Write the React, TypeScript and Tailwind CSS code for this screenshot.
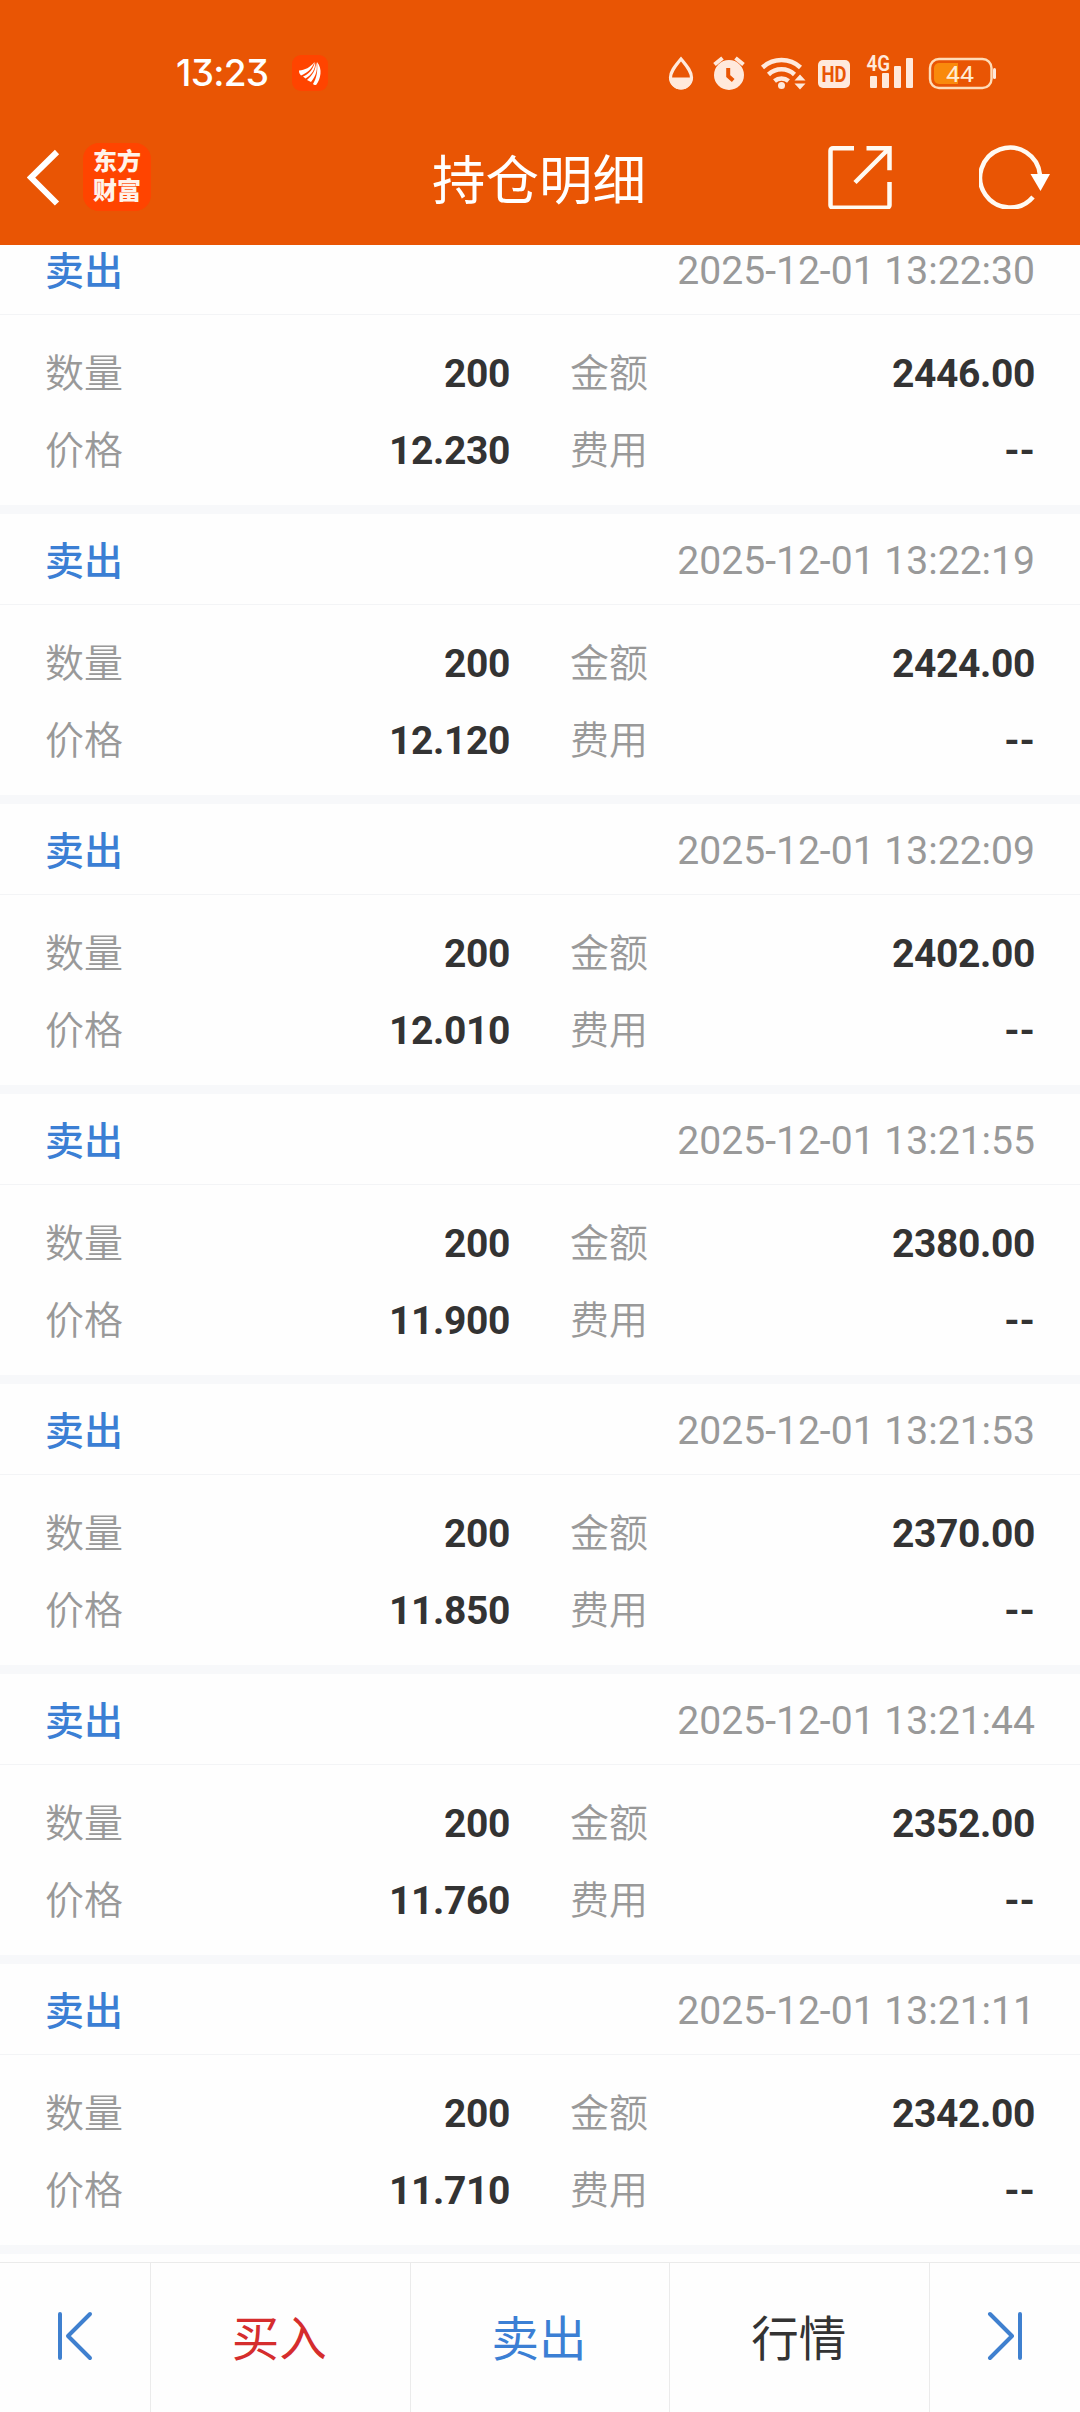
import React from "react";

const FONT = "font-['Roboto','Noto_Sans_CJK_SC',sans-serif]";

type Trade = { time: string; qty: string; amount: string; price: string };

const trades: Trade[] = [
  { time: "2025-12-01 13:22:30", qty: "200", amount: "2446.00", price: "12.230" },
  { time: "2025-12-01 13:22:19", qty: "200", amount: "2424.00", price: "12.120" },
  { time: "2025-12-01 13:22:09", qty: "200", amount: "2402.00", price: "12.010" },
  { time: "2025-12-01 13:21:55", qty: "200", amount: "2380.00", price: "11.900" },
  { time: "2025-12-01 13:21:53", qty: "200", amount: "2370.00", price: "11.850" },
  { time: "2025-12-01 13:21:44", qty: "200", amount: "2352.00", price: "11.760" },
  { time: "2025-12-01 13:21:11", qty: "200", amount: "2342.00", price: "11.710" },
];

function Field({ label, value }: { label: string; value: string }) {
  return (
    <div className="flex h-[77px] items-center justify-between">
      <span className="font-[350] text-[#999999]">{label}</span>
      <span className={`font-bold text-[#333333] ${value === "--" ? "tracking-normal" : "tracking-[-0.35px]"}`}>{value}</span>
    </div>
  );
}

function TradeCard({ trade }: { trade: Trade }) {
  return (
    <section className="h-[290px] shrink-0 border-b-9 border-[#f7f8fa] text-[39px] leading-none">
      <div className="flex h-[91px] items-center justify-between border-b border-[#f3f4f6] px-[45px] pt-[5px]">
        <span className="pt-px font-medium text-[#3b7fd4]">卖出</span>
        <span className="text-[39.1px] text-[#999999]">{trade.time}</span>
      </div>
      <div className="grid grid-cols-2 gap-x-[60px] px-[45px] pt-[21px]">
        <Field label="数量" value={trade.qty} />
        <Field label="金额" value={trade.amount} />
        <Field label="价格" value={trade.price} />
        <Field label="费用" value="--" />
      </div>
    </section>
  );
}

function StatusBar() {
  return (
    <div className="flex h-[143px] items-center pt-0.5 pl-[176px] pr-[84px]">
      <span className="w-[93px] text-[37px] leading-none font-medium whitespace-nowrap text-white font-['Inter',sans-serif] tracking-[-0.7px] [font-feature-settings:'cv09']">
        13:23
      </span>
      <svg className="ml-[23px]" width="36" height="36" viewBox="0 0 36 36">
        <rect width="36" height="36" rx="9" fill="#ff4400" />
        <path
          d="M7 15.500c6-.5 11-3 15.500-8.500-2.500 7-7.500 11-13.500 13.500-1.500-1.500-2-3-2-5zM11 21.500c6-2.500 10-7 12-14.500 1 7-3.500 13-9.500 16.500zM15 25c5-4.500 9-9.500 9-18 2 7 .5 13-5 20zM21 29c3.500-6 5-12 4-22 6 7 3.500 17-.5 22.500-1.500 1-2.500.5-3.500-.5z"
          fill="#fff"
        />
      </svg>
      <svg className="ml-auto overflow-visible" width="328" height="36" viewBox="668 54 328 36">
        <g fill="#ffe9dc">
          <path d="M681 58c-5 6.300-10.500 12-10.500 18.500a10.500 10.500 0 0 0 21 0c0-6.500-5.500-12.200-10.500-18.500z" fill="none" stroke="#ffe9dc" strokeWidth="3.200" />
          <path d="M669.500 76.500h23a11.500 12 0 0 1-23 0z" />
          <circle cx="729" cy="74" r="15" />
          <path d="M714.500 63.500l8-6.500M743.500 63.500l-8-6.500" stroke="#ffe9dc" strokeWidth="4" fill="none" />
          <path d="M728.200 67v8l5 4.500" stroke="#e95504" strokeWidth="4" fill="none" />
          <path d="M762.500 66.500a28 28 0 0 1 38 0M768.500 73.500a19 19 0 0 1 26 0M774.500 80a11 11 0 0 1 14 0" stroke="#ffe9dc" strokeWidth="4.500" fill="none" />
          <circle cx="781.500" cy="84.500" r="3.500" />
          <path d="M800 73.500l5.500 6h-11zM800 88.500l5.500-6h-11z" />
          <rect x="818" y="59" width="32" height="28" rx="5" />
          <rect x="870" y="75" width="7" height="12" rx="1" />
          <rect x="882" y="72" width="7" height="15" rx="1" />
          <rect x="894" y="65" width="7" height="22" rx="1" />
          <rect x="906" y="57" width="7" height="30" rx="1" />
          <rect x="993" y="67" width="3" height="11" rx="1.500" />
        </g>
        <text x="834" y="80.700" textAnchor="middle" textLength="25" lengthAdjust="spacingAndGlyphs" className="text-[22px] font-bold font-['Roboto',sans-serif]" fill="#e95504">HD</text>
        <text x="866.500" y="70" textLength="23.500" lengthAdjust="spacingAndGlyphs" className="text-[21.5px] font-semibold font-['Roboto',sans-serif]" fill="#ffe9dc">4G</text>
        <rect x="930" y="58" width="61.500" height="29" rx="9" fill="none" stroke="#ffdcb8" strokeWidth="2.400" />
        <path d="M958 62h-19a5 5 0 0 0-5 5v11a5 5 0 0 0 5 5h19z" fill="#f98a0c" />
        <text x="960" y="81.200" textAnchor="middle" textLength="28" lengthAdjust="spacingAndGlyphs" className="text-[22px] font-normal font-['Roboto',sans-serif]" fill="#ffecd6">44</text>
      </svg>
    </div>
  );
}

function TitleBar() {
  return (
    <div className="relative flex h-[102px] items-start justify-between pr-[30px] pl-[27px]">
      <div className="flex items-center">
        <svg width="33" height="66" viewBox="0 0 33 66" fill="none">
          <path d="M30 8L4 33.500l26 26" stroke="#fff" strokeWidth="6" />
        </svg>
        <div className="ml-[23px] flex size-[68px] flex-col items-center justify-center rounded-[16px] bg-[#ff4400] text-[24px] leading-[29px] font-black text-[#fff3ea]">
          <span>东方</span>
          <span>财富</span>
        </div>
      </div>
      <h1 className="absolute inset-x-0 top-1 pr-0.5 text-center text-[53.5px] leading-[70px] font-normal text-white">
        持仓明细
      </h1>
      <div className="flex items-start pt-0.5">
        <svg width="64" height="64" viewBox="0 0 64 64" fill="none" stroke="#fffaf2" strokeWidth="4.500">
          <path d="M26 3.200H5a2.500 2.500 0 0 0-2.500 2.500v54.500a2.500 2.500 0 0 0 2.500 2.500h54a2.500 2.500 0 0 0 2.500-2.500V37" />
          <path d="M38.500 3.200h23v22M61 3.500L27 37.500" />
        </svg>
        <svg className="ml-[87px]" width="71" height="64" viewBox="0 0 71 64" fill="none">
          <path d="M61 30A30 30 0 1 0 54 52" stroke="#fffaf2" strokeWidth="4.500" />
          <path d="M51.500 29H71l-9.500 17z" fill="#fff" />
        </svg>
      </div>
    </div>
  );
}

const TAB = "flex flex-1 items-center justify-center border-r border-[#ebebeb] pt-[7px] pr-0.5";

function BottomBar() {
  return (
    <nav className="mt-auto flex h-[150px] shrink-0 border-t border-[#ebebeb] bg-[#fefefe] text-[47.5px] leading-none">
      <div className="flex w-[151px] items-center justify-center border-r border-[#ebebeb] pb-1">
        <svg width="36" height="52" viewBox="0 0 36 52" fill="none" stroke="#3f80cf" strokeWidth="4" strokeLinecap="round" strokeLinejoin="round">
          <path d="M3 4v44M33 4L11 26l22 22" />
        </svg>
      </div>
      <div className={`${TAB} text-[#d52d2d]`}>买入</div>
      <div className={`${TAB} text-[#3b7fd4]`}>卖出</div>
      <div className={`${TAB} text-[#333333]`}>行情</div>
      <div className="flex w-[150px] items-center justify-center pb-1">
        <svg width="36" height="52" viewBox="0 0 36 52" fill="none" stroke="#3f80cf" strokeWidth="4" strokeLinecap="round" strokeLinejoin="round">
          <path d="M33 4v44M3 4l22 22L3 48" />
        </svg>
      </div>
    </nav>
  );
}

export default function App() {
  return (
    <div className={`flex h-[2412px] w-[1080px] flex-col overflow-hidden bg-[#fefefe] ${FONT}`}>
      <header className="h-[245px] shrink-0 bg-[#e95504]">
        <StatusBar />
        <TitleBar />
      </header>
      <main className="flex h-[2009px] shrink-0 flex-col justify-end overflow-hidden">
        {trades.map((t) => (
          <TradeCard key={t.time} trade={t} />
        ))}
      </main>
      <BottomBar />
    </div>
  );
}
